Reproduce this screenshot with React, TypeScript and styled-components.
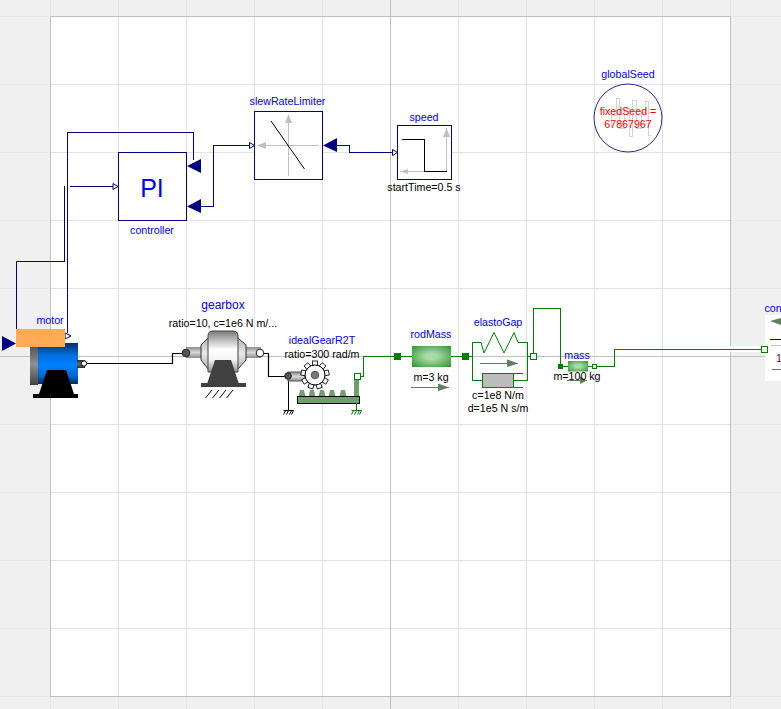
import React from "react";
import styled, { createGlobalStyle } from "styled-components";

const Global = createGlobalStyle`
  html, body { margin: 0; padding: 0; background: #f0f0f0; }
`;

const gridLines = (color: string, offset: number) => `
  linear-gradient(to right, transparent ${offset}px, ${color} ${offset}px, ${color} ${offset + 1}px, transparent ${offset + 1}px),
  linear-gradient(to bottom, transparent ${offset}px, ${color} ${offset}px, ${color} ${offset + 1}px, transparent ${offset + 1}px)`;

const axisLines = (x: number, y: number) => `
  linear-gradient(to right, transparent ${x}px, #c0c0c0 ${x}px, #c0c0c0 ${x + 1}px, transparent ${x + 1}px),
  linear-gradient(to bottom, transparent ${y}px, #c0c0c0 ${y}px, #c0c0c0 ${y + 1}px, transparent ${y + 1}px)`;

const Workspace = styled.div`
  position: relative;
  width: 781px;
  height: 709px;
  overflow: hidden;
  box-sizing: border-box;
  padding: 16px 0 0 50px;
  background-color: #f0f0f0;
  background-image: ${axisLines(390, 356)}, ${gridLines("#e8e8e8", 0)};
  background-size: 100% 100%, 100% 100%, 68px 68px, 68px 68px;
  background-position: 0 0, 0 0, 50px 16px, 50px 16px;
`;

const Sheet = styled.div`
  box-sizing: border-box;
  width: 681px;
  height: 681px;
  border: 1px solid #c0c0c0;
  background-color: #ffffff;
  background-image: ${axisLines(339, 339)}, ${gridLines("#e2e2e2", 67)};
  background-size: 100% 100%, 100% 100%, 68px 68px, 68px 68px;
`;

const Canvas = styled.svg`
  position: absolute;
  left: 0;
  top: 0;
  width: 781px;
  height: 709px;
`;

const Label = styled.text<{ $tone?: "name" | "param" | "seed" | "value"; $size?: number }>`
  font-family: "Liberation Sans", Arial, sans-serif;
  font-size: ${(p) => p.$size ?? 10.67}px;
  text-anchor: middle;
  fill: ${(p) =>
    p.$tone === "param" ? "#000000" : p.$tone === "seed" ? "#ff0000" : p.$tone === "value" ? "#80003f" : "#0000ff"};
`;

const Wire = styled.path<{ $color: string; $w?: number }>`
  fill: none;
  stroke: ${(p) => p.$color};
  stroke-width: ${(p) => p.$w ?? 1}px;
  shape-rendering: crispEdges;
`;

const Line = styled.path<{ $color: string; $w?: number }>`
  fill: none;
  stroke: ${(p) => p.$color};
  stroke-width: ${(p) => p.$w ?? 1}px;
`;

const Block = styled.rect`
  fill: #ffffff;
  stroke: #000080;
  stroke-width: 1px;
  shape-rendering: crispEdges;
`;

const NAVY = "#000080";
const GREEN = "#008000";
const GROUND = "#000000";

const Hatch = ({ x, y, color = GROUND }: { x: number; y: number; color?: string }) => (
  <Line
    $color={color}
    d={`M${x} ${y}h10 M${x + 2} ${y}l-2 4 M${x + 5} ${y}l-2 4 M${x + 8} ${y}l-2 4 M${x + 10} ${y}l-2 4`}
  />
);

const FlowArrow = ({ x, y, len, head }: { x: number; y: number; len: number; head: number }) => (
  <g>
    <Wire $color="#5f7f5f" d={`M${x} ${y + 0.5}h${len}`} />
    <polygon fill="#5f7f5f" points={`${x + len - head},${y - 3.5} ${x + len},${y + 0.5} ${x + len - head},${y + 4}`} />
  </g>
);

const Port = ({ x, y, s, filled }: { x: number; y: number; s: number; filled?: boolean }) => (
  <rect
    x={x}
    y={y}
    width={s}
    height={s}
    fill={filled ? GREEN : "#ffffff"}
    stroke={GREEN}
    shapeRendering="crispEdges"
  />
);

const Defs = () => (
  <defs>
    <linearGradient id="motorBlue" x1="0" y1="0" x2="0" y2="1">
      <stop offset="0" stopColor="#00306a" />
      <stop offset="0.3" stopColor="#0070e0" />
      <stop offset="0.55" stopColor="#0080ff" />
      <stop offset="0.8" stopColor="#0068d0" />
      <stop offset="1" stopColor="#002c60" />
    </linearGradient>
    <linearGradient id="motorGray" x1="0" y1="0" x2="0" y2="1">
      <stop offset="0" stopColor="#555555" />
      <stop offset="0.45" stopColor="#909090" />
      <stop offset="1" stopColor="#444444" />
    </linearGradient>
    <linearGradient id="shaftDark" x1="0" y1="0" x2="0" y2="1">
      <stop offset="0" stopColor="#2c2c2c" />
      <stop offset="0.5" stopColor="#6a6a6a" />
      <stop offset="1" stopColor="#2c2c2c" />
    </linearGradient>
    <linearGradient id="shaftLight" x1="0" y1="0" x2="0" y2="1">
      <stop offset="0" stopColor="#8c8c8c" />
      <stop offset="0.5" stopColor="#d8d8d8" />
      <stop offset="1" stopColor="#8c8c8c" />
    </linearGradient>
    <linearGradient id="housing" x1="0" y1="0" x2="0" y2="1">
      <stop offset="0" stopColor="#b4b4b4" />
      <stop offset="0.5" stopColor="#e8e8e8" />
      <stop offset="1" stopColor="#b4b4b4" />
    </linearGradient>
    <linearGradient id="drum" x1="0" y1="0" x2="0" y2="1">
      <stop offset="0" stopColor="#7a7a7a" />
      <stop offset="0.45" stopColor="#ffffff" />
      <stop offset="0.7" stopColor="#f4f4f4" />
      <stop offset="1" stopColor="#909090" />
    </linearGradient>
    <radialGradient id="massFill" cx="0.5" cy="0.5" r="0.7">
      <stop offset="0.2" stopColor="#a8dba8" />
      <stop offset="1" stopColor="#2f962f" />
    </radialGradient>
  </defs>
);

const Controls = () => (
  <g>
    <Wire $color={NAVY} d="M67.5 333V132.5H193.5V160" />
    <Wire $color={NAVY} d="M64.5 186V261.5H16.5V340" />
    <Wire $color={NAVY} d="M70 186.5H114" />
    <Wire $color={NAVY} d="M200 206.5H213.5V145.5H250" />
    <Wire $color={NAVY} d="M336 145.5H349.5V152.5H393" />

    <polygon fill={NAVY} points="2,336 16,343.5 2,351" />
    <polygon fill="#fff" stroke={NAVY} points="65,333 71,336 65,339" />

    <Block x={118.5} y={152.5} width={68} height={68} />
    <polygon fill={NAVY} points="187,166 201,159 201,173" />
    <polygon fill={NAVY} points="187,206.5 201,199 201,213" />
    <polygon fill="#fff" stroke={NAVY} points="118,186.5 113,183.5 113,189.5" />
    <Label x={152} y={197} $size={25}>PI</Label>
    <Label x={152} y={234}>controller</Label>

    <Block x={254.5} y={111.5} width={68} height={68} />
    <polygon fill="#fff" stroke={NAVY} points="254.5,145.5 249.5,142.5 249.5,148.5" />
    <polygon fill={NAVY} points="323,145.5 337,138 337,152" />
    <Wire $color="#c0c0c0" d="M258 145.5H319M288.5 115V176" />
    <polygon fill="#c0c0c0" points="257,145.5 266,142 266,149" />
    <polygon fill="#c0c0c0" points="288.5,114 285,123 292,123" />
    <Line $color="#000" d="M271 121L304.5 169" />
    <Label x={287.5} y={105}>slewRateLimiter</Label>

    <Block x={397.5} y={125.5} width={54} height={53.5} />
    <polygon fill="#fff" stroke={NAVY} points="397.5,152.5 392.5,149.5 392.5,155.5" />
    <Wire $color="#c0c0c0" d="M400 171.5H447M446.5 128V172" />
    <polygon fill="#c0c0c0" points="446.5,128 443,137 450,137" />
    <polygon fill="#c0c0c0" points="400,171.5 408,169 408,174" />
    <Wire $color="#000" d="M402 139.5H424.5V171.5H447" />
    <Label x={424} y={121}>speed</Label>
    <Label $tone="param" x={424} y={191}>startTime=0.5 s</Label>
  </g>
);

const Seed = () => (
  <g>
    <circle cx={628} cy={118} r={34} fill="#fff" stroke="#28288a" />
    <Wire
      $color="#d4d4d4"
      d="M611.5 128V115H616.5V98H619.5V128H624.5V108H629.5V136H632.5V100H636.5V128H641.5V112H645.5V101H648V135H651"
    />
    <Label x={628} y={78}>globalSeed</Label>
    <Label $tone="seed" x={628} y={115}>fixedSeed =</Label>
    <Label $tone="seed" x={628} y={128}>67867967</Label>
  </g>
);

const Motor = () => (
  <g>
    <Label x={50} y={324}>motor</Label>
    <rect x={30} y={347} width={8} height={38} fill="url(#motorGray)" />
    <rect x={38} y={343} width={40} height={41} fill="url(#motorBlue)" />
    <rect x={16} y={329} width={49} height={18} fill="#ffaa55" />
    <rect x={77} y={360} width={8} height={8} fill="url(#shaftDark)" />
    <polygon fill="#000" points="47,370 66,370 74,394 39,394" />
    <rect x={33} y={394} width={45} height={4} fill="#000" />
    <circle cx={84} cy={363.5} r={2.7} fill="#fff" stroke="#000" />
    <Line $color="#000" $w={1.2} d="M87 363.5H172.5V353.5H182" />
  </g>
);

const Gearbox = () => (
  <g>
    <Label x={223} y={309} $size={12}>gearbox</Label>
    <Label $tone="param" x={223} y={327}>ratio=10, c=1e6 N m/...</Label>
    <rect x={186} y={347} width={16} height={11} fill="url(#shaftLight)" />
    <rect x={245} y={347} width={16} height={11} fill="url(#shaftLight)" />
    <polygon
      fill="url(#housing)"
      stroke="#333"
      points="201,345 208,338 238,338 246,345 246,360 238,369 208,369 201,360"
    />
    <path d="M208 336Q208 331 213 331H233Q238 331 238 336V372H208Z" fill="url(#drum)" stroke="#444" />
    <polygon fill="#404040" points="215,360 231,360 239,384 207,384" />
    <rect x={201} y={383} width={45} height={4} fill="#404040" />
    <Line $color="#000" d="M212 390L205.5 398M219 390L212.5 398M226 390L219.5 398M233 390L226.5 398" />
    <circle cx={186} cy={353} r={3.8} fill="#555" stroke="#222" />
    <circle cx={260} cy={353} r={3.8} fill="#fff" stroke="#222" />
    <Line $color="#000" $w={1.2} d="M264 353.5H268.5V376.5H287" />
  </g>
);

const ToothAngles = [0, 40, 80, 120, 160, 200, 240, 280, 320];
const RackTeeth = [302, 312, 322, 332, 343];

const IdealGear = () => (
  <g>
    <Label x={322} y={344}>idealGearR2T</Label>
    <Label $tone="param" x={322} y={358}>ratio=300 rad/m</Label>
    <Wire $color="#000" d="M288.5 380V410" />
    <Hatch x={283.5} y={410.5} />
    <rect x={288} y={372} width={17} height={9} fill="url(#shaftLight)" stroke="#555" />
    <circle cx={288} cy={376} r={3.3} fill="#555" stroke="#222" />
    {RackTeeth.map((x) => (
      <polygon key={x} fill="#6f9f6f" points={`${x - 3.5},397 ${x - 2},390 ${x + 2},390 ${x + 3.5},397`} />
    ))}
    <rect x={354} y={378} width={5} height={18} fill="#6f9f6f" />
    <rect x={297.5} y={396.5} width={62} height={7} fill="#6f9f6f" stroke="#000" shapeRendering="crispEdges" />
    {ToothAngles.map((a) => (
      <rect
        key={a}
        x={312.5}
        y={361}
        width={5}
        height={6}
        fill="#fff"
        stroke="#000"
        strokeWidth={0.8}
        transform={`rotate(${a} 315 375)`}
      />
    ))}
    <circle cx={315} cy={375} r={10} fill="#fff" stroke="#000" />
    <circle cx={315} cy={375} r={3.8} fill="#777" stroke="#555" />
    <Port x={354.5} y={373.5} s={5.5} />
    <Wire $color={GREEN} d="M360 376.5H363.5V356.5H394" />
    <Wire $color={GREEN} d="M356.5 403V410" />
    <Hatch x={351.5} y={410.5} color={GREEN} />
  </g>
);

const RodMass = () => (
  <g>
    <Label x={431} y={338}>rodMass</Label>
    <Port x={394.5} y={353.5} s={6} filled />
    <Wire $color={GREEN} d="M400 356.5H412M451 356.5H462" />
    <rect x={412} y={346} width={39} height={21} fill="url(#massFill)" />
    <Port x={462.5} y={353.5} s={6} filled />
    <Label $tone="param" x={431} y={381}>m=3 kg</Label>
    <FlowArrow x={411} y={387} len={38} head={11} />
  </g>
);

const ElastoGap = () => (
  <g>
    <Label x={498} y={326}>elastoGap</Label>
    <Wire $color={GREEN} d="M469 356.5H472.5" />
    <Wire $color={GREEN} d="M482 380.5H472.5V342.5H481" />
    <Line $color={GREEN} d="M481 342.5L484 353L494 332.5L504 353L514 332.5L518 342.5" />
    <Wire $color={GREEN} d="M518 342.5H527.5V380.5H513M513 373.5H523M513 387.5H523M527.5 356.5H530" />
    <rect x={482.5} y={373.5} width={31} height={14} fill="#bcbcbc" stroke={GREEN} shapeRendering="crispEdges" />
    <FlowArrow x={480} y={363} len={38} head={11} />
    <Port x={530.5} y={353.5} s={6} />
    <Wire $color={GREEN} d="M533.5 353V308.5H560.5V364" />
    <Label $tone="param" x={498} y={399}>c=1e8 N/m</Label>
    <Label $tone="param" x={498} y={412}>d=1e5 N s/m</Label>
  </g>
);

const SlidingMass = () => (
  <g>
    <Wire $color={GREEN} d="M562 366.5H568M588 366.5H592M597 366.5H614.5V349.5H761" />
    <Port x={558.5} y={364.5} s={4} filled />
    <rect x={568} y={361} width={20} height={10.5} fill="url(#massFill)" />
    <Port x={592.5} y={364.5} s={4} />
    <Label x={577} y={359}>mass</Label>
    <FlowArrow x={567} y={380} len={20} head={7} />
    <Label $tone="param" x={577} y={380}>m=100 kg</Label>
  </g>
);

const ClippedBlock = () => (
  <g>
    <rect x={730} y={346} width={35} height={6} fill="#fff" />
    <rect x={765} y={315} width={16} height={66} fill="#fff" />
    <Wire $color={GREEN} d="M730 349.5H761" />
    <Label x={773} y={312}>con</Label>
    <polygon fill="#5f7f5f" points="770,321 781,318 781,325" />
    <Wire $color={NAVY} d="M770 339.5H781" />
    <Wire $color="#c0c0c0" d="M771 345.5H781" />
    <Label $tone="value" x={779} y={362}>1</Label>
    <Wire $color="#5f7f5f" d="M772 369.5H781" />
    <Port x={761.5} y={346.5} s={6} />
  </g>
);

export default function App() {
  return (
    <>
      <Global />
      <Workspace>
        <Sheet />
        <Canvas viewBox="0 0 781 709">
          <Defs />
          <Controls />
          <Seed />
          <Motor />
          <Gearbox />
          <IdealGear />
          <RodMass />
          <ElastoGap />
          <SlidingMass />
          <ClippedBlock />
        </Canvas>
      </Workspace>
    </>
  );
}
